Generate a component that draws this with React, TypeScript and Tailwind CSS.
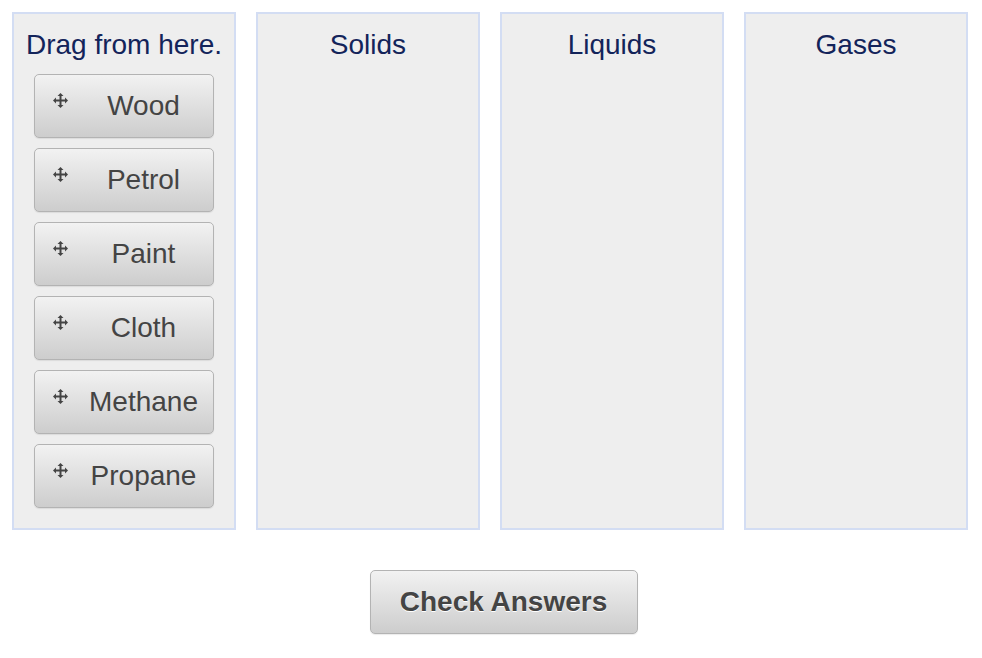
const items = ["Wood", "Petrol", "Paint", "Cloth", "Methane", "Propane"];
const targets = ["Solids", "Liquids", "Gases"];

function MoveIcon() {
  return (
    <svg width="15" height="15" viewBox="0 0 15 15" className="shrink-0" fill="#444">
      <rect x="6.5" y="2.5" width="2" height="10" />
      <rect x="2.5" y="6.5" width="10" height="2" />
      <polygon points="7.5,0 10.5,3 4.5,3" />
      <polygon points="7.5,15 10.5,12 4.5,12" />
      <polygon points="0,7.5 3,4.5 3,10.5" />
      <polygon points="15,7.5 12,4.5 12,10.5" />
    </svg>
  );
}

function Column({ title, children }: { title: string; children?: React.ReactNode }) {
  return (
    <div className="w-[224px] h-[518px] border-2 border-[#d3ddf3] bg-[#eeeeee] flex flex-col items-center pt-[14px]">
      <h2 className="text-[28px] leading-[34px] text-[#13245a]">{title}</h2>
      {children}
    </div>
  );
}

export default function App() {
  return (
    <div className="w-[982px] h-[658px] bg-white pt-[12px] pl-[12px] font-['Liberation_Sans',Arial,sans-serif]">
      <div className="flex gap-[20px]">
        <Column title="Drag from here.">
          <div className="flex flex-col gap-[10px] mt-[12px]">
            {items.map((item) => (
              <div
                key={item}
                className="w-[180px] h-[64px] flex items-center pl-[18px] rounded-[5px] border border-[#b3b3b3] bg-gradient-to-b from-[#f2f2f2] to-[#cdcdcd] shadow-[0_1px_1px_rgba(0,0,0,0.08)]"
              >
                <span className="w-[22px] self-start mt-[18px]">
                  <MoveIcon />
                </span>
                <span className="flex-1 text-center text-[28px] text-[#444444] pr-[1px]">{item}</span>
              </div>
            ))}
          </div>
        </Column>
        {targets.map((t) => (
          <Column key={t} title={t} />
        ))}
      </div>
      <div className="flex justify-center mt-[40px] pl-[13px]">
        <button className="w-[268px] h-[64px] rounded-[5px] border border-[#b3b3b3] bg-gradient-to-b from-[#f2f2f2] to-[#cdcdcd] text-[28px] font-bold text-[#444444] [text-shadow:0_1px_0_#ffffff] shadow-[0_1px_1px_rgba(0,0,0,0.08)]">
          Check Answers
        </button>
      </div>
    </div>
  );
}
